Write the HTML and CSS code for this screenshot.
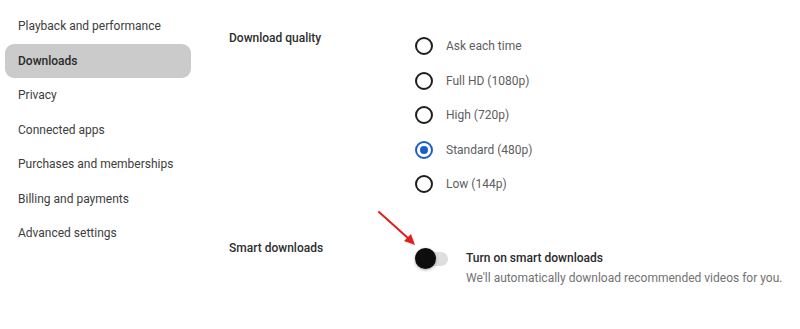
FILE: index.html
```html
<!DOCTYPE html>
<html>
<head>
<meta charset="utf-8">
<link rel="stylesheet" href="styles.css">
</head>
<body>
<div class="page">
  <nav class="sidebar">
    <div class="nav-item">Playback and performance</div>
    <div class="nav-item active">Downloads</div>
    <div class="nav-item">Privacy</div>
    <div class="nav-item">Connected apps</div>
    <div class="nav-item">Purchases and memberships</div>
    <div class="nav-item">Billing and payments</div>
    <div class="nav-item">Advanced settings</div>
  </nav>
  <main class="content">
    <section class="row quality">
      <div class="label">Download quality</div>
      <div class="options">
        <div class="option"><span class="radio"></span><span class="opt-text">Ask each time</span></div>
        <div class="option"><span class="radio"></span><span class="opt-text">Full HD (1080p)</span></div>
        <div class="option"><span class="radio"></span><span class="opt-text">High (720p)</span></div>
        <div class="option"><span class="radio checked"></span><span class="opt-text">Standard (480p)</span></div>
        <div class="option"><span class="radio"></span><span class="opt-text">Low (144p)</span></div>
      </div>
    </section>
    <section class="row smart">
      <div class="label">Smart downloads</div>
      <div class="toggle-wrap">
        <div class="toggle"><span class="track"></span><span class="knob"></span></div>
        <div class="toggle-text">
          <div class="toggle-title">Turn on smart downloads</div>
          <div class="toggle-desc">We'll automatically download recommended videos for you.</div>
        </div>
      </div>
    </section>
  </main>
</div>
<svg class="arrow" width="50" height="45" viewBox="0 0 50 45">
  <line x1="6" y1="5" x2="36" y2="32" stroke="#e0201c" stroke-width="2" stroke-linecap="round"/>
  <polygon points="42,38 31,34 38,27" fill="#e0201c"/>
</svg>
</body>
</html>
```
FILE: styles.css
```css
html, body {
  margin: 0;
  padding: 0;
  background: #ffffff;
}
body {
  font-family: Roboto, "Liberation Sans", Arial, sans-serif;
  color: #3a3a3a;
  width: 800px;
  height: 329px;
  overflow: hidden;
  position: relative;
}
.page {
  display: flex;
}
.sidebar {
  width: 186px;
  padding: 9px 0 0 5px;
  display: flex;
  flex-direction: column;
}
.nav-item {
  height: 34.5px;
  line-height: 34.5px;
  padding-left: 13px;
  font-size: 12px;
  color: #3d3d3d;
  border-radius: 9px;
}
.nav-item.active {
  background: #cbcbcb;
  font-weight: 500;
  color: #2a2a2a;
}
.content {
  padding-left: 38px;
  padding-top: 29px;
  flex: 1;
}
.row {
  display: flex;
}
.label {
  width: 186px;
  font-size: 12px;
  font-weight: 500;
  color: #2e2e2e;
  line-height: 20px;
}
.quality .label {
  margin-top: -1px;
}
.options {
  display: flex;
  flex-direction: column;
}
.option {
  height: 34.5px;
  display: flex;
  align-items: center;
}
.radio {
  width: 14px;
  height: 14px;
  border: 2px solid #1e1e1e;
  border-radius: 50%;
  box-sizing: content-box;
  position: relative;
}
.radio.checked {
  border-color: #1a5fc8;
}
.radio.checked::after {
  content: "";
  position: absolute;
  left: 3px;
  top: 3px;
  width: 8px;
  height: 8px;
  border-radius: 50%;
  background: #1a5fc8;
}
.opt-text {
  margin-left: 13px;
  font-size: 12px;
  color: #5e5e5e;
}
.smart {
  margin-top: 36px;
}
.toggle-wrap {
  display: flex;
  margin-top: 10px;
}
.toggle {
  width: 33px;
  height: 22px;
  position: relative;
}
.track {
  position: absolute;
  left: 6px;
  top: 4px;
  width: 27px;
  height: 14px;
  border-radius: 7px;
  background: #dedede;
}
.knob {
  position: absolute;
  left: 0;
  top: 0;
  width: 21px;
  height: 21px;
  border-radius: 50%;
  background: #0d0d0d;
  box-shadow: 0 1px 3px rgba(0,0,0,0.35);
}
.toggle-text {
  margin-left: 18px;
}
.toggle-title {
  font-size: 12px;
  font-weight: 500;
  color: #2a2a2a;
  line-height: 18px;
  margin-top: 1px;
}
.toggle-desc {
  font-size: 12px;
  color: #727272;
  line-height: 18px;
  margin-top: 2px;
}
.arrow {
  position: absolute;
  left: 373px;
  top: 207px;
}
```
